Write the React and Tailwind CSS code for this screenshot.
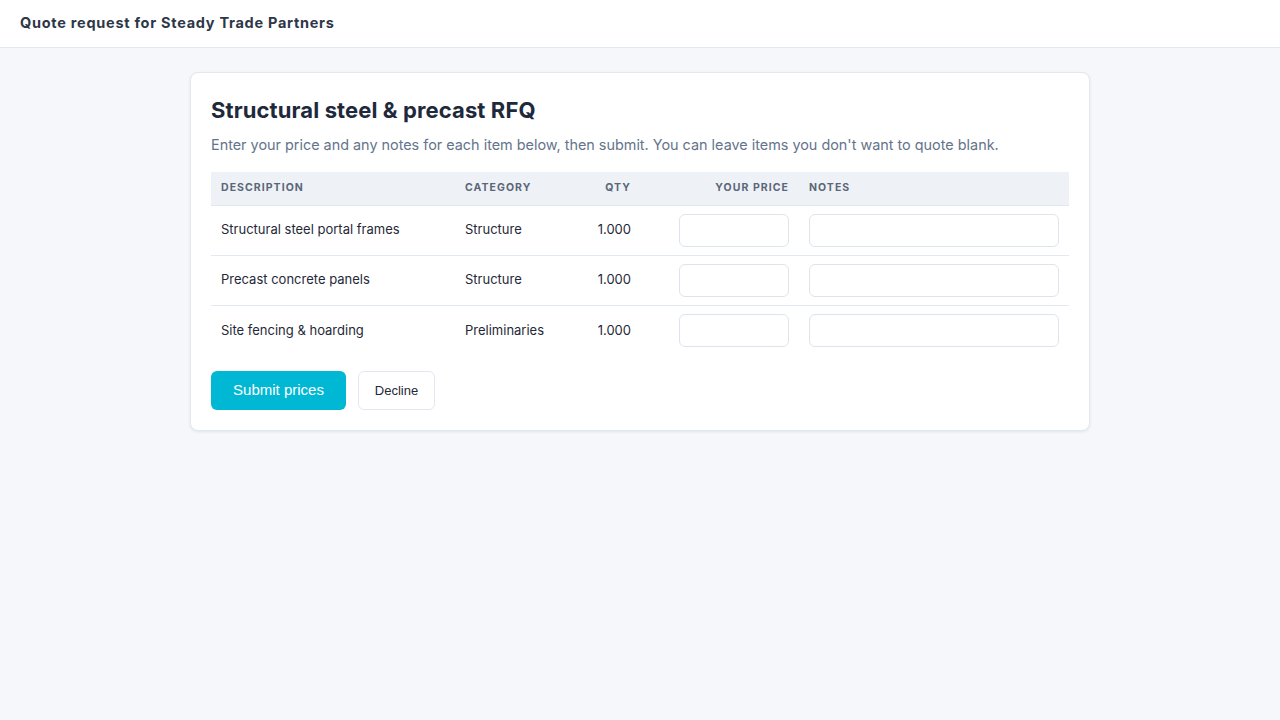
import React from "react";

const rows = [
  { d: "Structural steel portal frames", c: "Structure", q: "1.000" },
  { d: "Precast concrete panels", c: "Structure", q: "1.000" },
  { d: "Site fencing & hoarding", c: "Preliminaries", q: "1.000" },
];

export default function App() {
  return (
    <div className="min-h-[720px] bg-[#f5f7fa] text-[#1f2937]" style={{ fontFamily: "Inter, 'Noto Sans', sans-serif" }}>
      <header className="h-12 bg-white border-b border-[#e2e8f0] flex items-center px-5">
        <h1 className="text-[14.5px] font-bold tracking-[0.05em] text-[#2d3748] -mt-[2px]">Quote request for Steady Trade Partners</h1>
      </header>
      <main className="pt-6 flex justify-center">
        <div className="w-[900px] bg-white border border-[#e2e8f0] rounded-lg shadow-[0_1px_3px_rgba(15,23,42,0.08)] px-5 pt-[23px] pb-5">
          <h2 className="text-[22px] font-bold text-[#1e293b] leading-7 tracking-[0.005em]">Structural steel &amp; precast RFQ</h2>
          <p className="mt-[11px] text-[14.4px] text-[#64748b] leading-5">Enter your price and any notes for each item below, then submit. You can leave items you don't want to quote blank.</p>
          <table className="mt-[17px] w-full border-collapse table-fixed text-[13px]">
            <colgroup>
              <col className="w-[244px]" />
              <col className="w-[110px]" />
              <col className="w-[76px]" />
              <col className="w-[158px]" />
              <col className="w-[270px]" />
            </colgroup>
            <thead>
              <tr className="bg-[#eef2f7] h-[33px] border-b border-[#e2e8f0] text-[10.5px] font-bold tracking-[0.1em] uppercase text-[#5b6678]">
                <th className="text-left px-[10px] font-bold">Description</th>
                <th className="text-left px-[10px] font-bold">Category</th>
                <th className="text-right px-[10px] font-bold">Qty</th>
                <th className="text-right px-[10px] font-bold">Your price</th>
                <th className="text-left px-[10px] font-bold">Notes</th>
              </tr>
            </thead>
            <tbody>
              {rows.map((r, i) => (
                <tr key={i} className="h-[50px] border-b border-[#e2e8f0] last:border-b-0">
                  <td className="px-[10px]">{r.d}</td>
                  <td className="px-[10px]">{r.c}</td>
                  <td className="px-[10px] text-right">{r.q}</td>
                  <td className="px-[10px]">
                    <div className="flex justify-end">
                      <input className="w-[110px] h-[33px] border border-[#dfe4ec] rounded-md bg-white outline-none" />
                    </div>
                  </td>
                  <td className="px-[10px]">
                    <input className="w-full h-[33px] border border-[#dfe4ec] rounded-md bg-white outline-none" />
                  </td>
                </tr>
              ))}
            </tbody>
          </table>
          <div className="mt-4 flex gap-3">
            <button className="h-[39px] w-[135px] rounded-md bg-[#00b8d4] text-white text-[15px]" style={{ fontFamily: "'Liberation Sans', Arial, sans-serif" }}>Submit prices</button>
            <button className="h-[39px] w-[77px] rounded-md bg-white border border-[#e2e8f0] text-[13px] text-[#1f2937]" style={{ fontFamily: "'Liberation Sans', Arial, sans-serif" }}>Decline</button>
          </div>
        </div>
      </main>
    </div>
  );
}
